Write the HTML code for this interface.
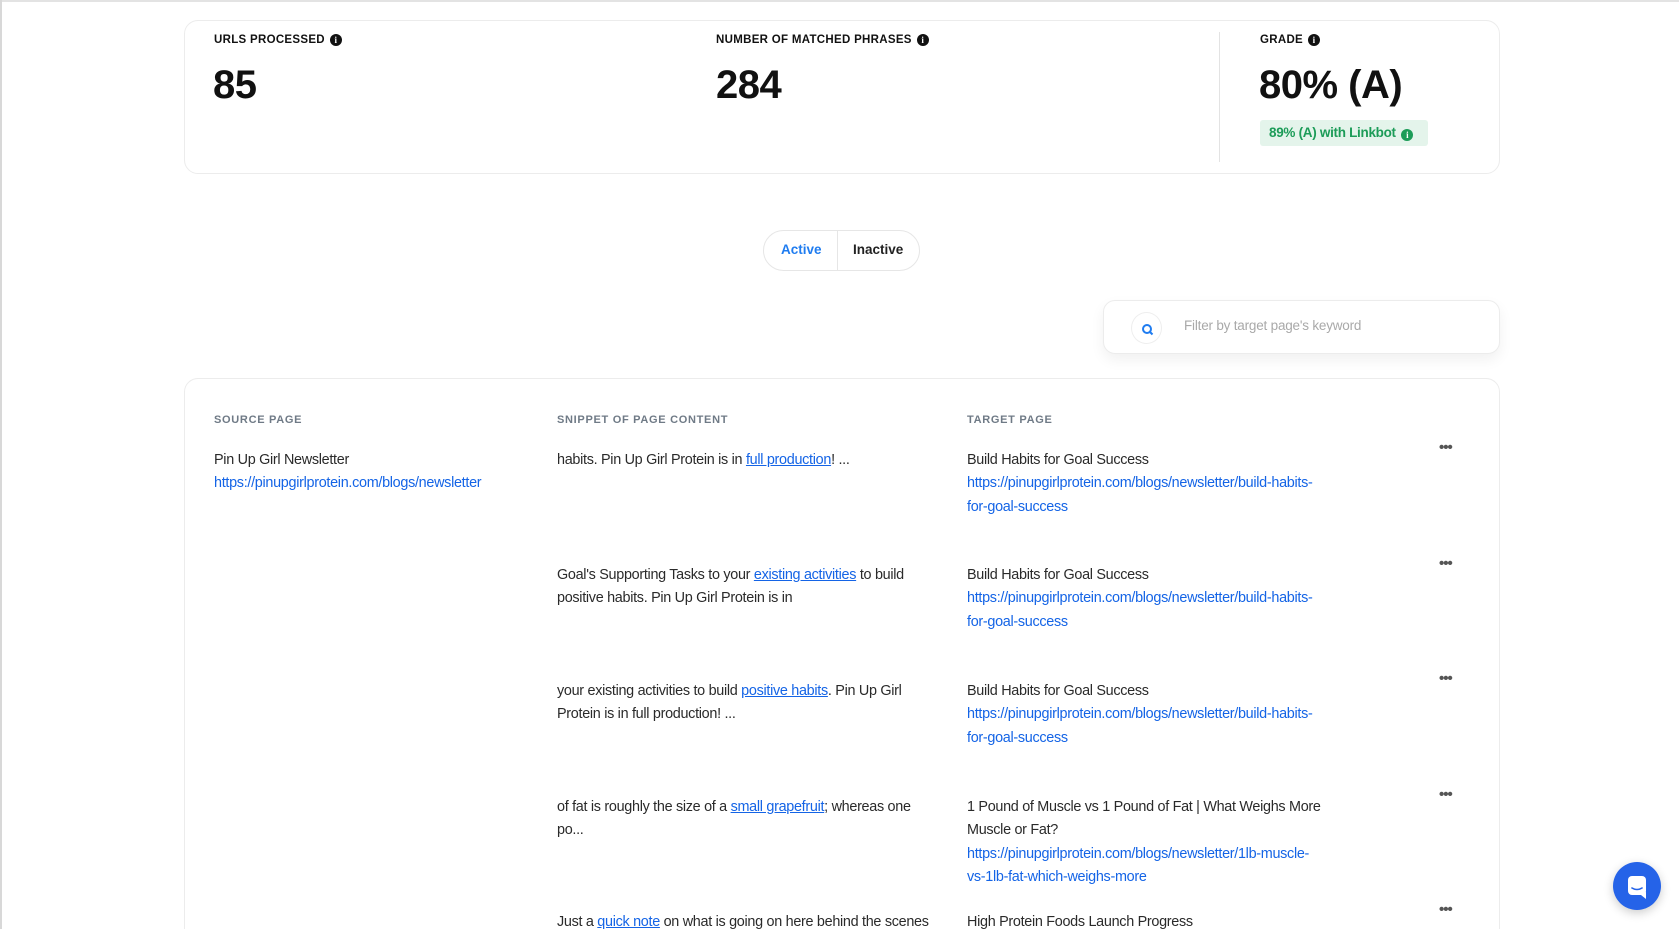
<!DOCTYPE html>
<html style="width:1679px;height:929px;overflow:hidden"><head><meta charset="utf-8"><style>
*{box-sizing:border-box;margin:0;padding:0}
body{width:1679px;height:929px;overflow:hidden;background:#fff;font-family:"Liberation Sans",sans-serif;color:#222;position:relative}
.topline{position:absolute;left:0;top:0;width:1679px;height:2px;background:#e3e3e3}
.leftline{position:absolute;left:0;top:0;width:2px;height:929px;background:#d8d8d8}
.card{position:absolute;border:1px solid #ececec;border-radius:14px;background:#fff}
.lbl{position:absolute;font-size:11.5px;font-weight:bold;letter-spacing:.3px;color:#111;display:flex;align-items:center;gap:5px;white-space:nowrap}
.info{display:inline-block;width:12px;height:12px;border-radius:50%;background:#111;color:#fff;font-size:9px;line-height:12px;text-align:center;font-weight:bold;font-family:"Liberation Serif",serif}
.num{position:absolute;font-size:40px;font-weight:bold;color:#111;letter-spacing:-.5px}
.badge{position:absolute;left:1260px;top:120px;width:168px;height:26px;background:#e4f4eb;border-radius:3px;color:#1c9c58;font-size:13.5px;font-weight:bold;line-height:26px;padding-left:9px;letter-spacing:-.3px;white-space:nowrap}
.badge .info{background:#1c9c58;vertical-align:-1px;margin-left:2px}
.toggle{position:absolute;left:763px;top:230px;width:157px;height:41px;border:1px solid #e6e6e6;border-radius:21px;font-size:13.5px;font-weight:bold}
.toggle span{position:absolute;top:11px}
.search{position:absolute;left:1103px;top:300px;width:397px;height:54px;border:1px solid #ececec;border-radius:12px;box-shadow:0 6px 14px rgba(0,0,0,.06);background:#fff}
.sicon{position:absolute;left:27px;top:11px;width:31px;height:32px;border:1px solid #eee;border-radius:50%}
.ph{position:absolute;left:80px;top:17px;font-size:13.5px;color:#a9a9a9;letter-spacing:-.2px}
.th{position:absolute;top:414px;font-size:11px;font-weight:bold;letter-spacing:.7px;color:#6f7a86}
.t{position:absolute;font-size:14.4px;line-height:23.3px;color:#2a2a2a;letter-spacing:-.3px;white-space:nowrap}
a{color:#1464e6;text-decoration:none}
a.u{text-decoration:underline}
.dots{position:absolute;left:1439px;font-size:15px;color:#555;font-weight:bold;letter-spacing:-1px}
.chat{position:absolute;left:1613px;top:862px;width:48px;height:48px;border-radius:50%;background:#2563e8;box-shadow:0 3px 10px rgba(0,0,0,.2)}
</style></head><body>
<div class="topline"></div><div class="leftline"></div>
<div class="card" style="left:184px;top:20px;width:1316px;height:154px"></div>
<div class="lbl" style="left:214px;top:34px">URLS PROCESSED <span class="info">i</span></div>
<div class="num" style="left:213px;top:63px">85</div>
<div class="lbl" style="left:716px;top:34px">NUMBER OF MATCHED PHRASES <span class="info">i</span></div>
<div class="num" style="left:716px;top:63px">284</div>
<div style="position:absolute;left:1219px;top:32px;width:1px;height:130px;background:#e3e3e3"></div>
<div class="lbl" style="left:1260px;top:34px">GRADE <span class="info">i</span></div>
<div class="num" style="left:1259px;top:63px">80% (A)</div>
<div class="badge">89% (A) with Linkbot <span class="info">i</span></div>

<div class="toggle"><span style="left:17px;color:#1f7cf0">Active</span><div style="position:absolute;left:73px;top:0;width:1px;height:39px;background:#e6e6e6"></div><span style="left:89px;color:#222">Inactive</span></div>

<div class="search"><div class="sicon"><svg width="31" height="32" viewBox="0 0 31 32"><circle cx="15" cy="16" r="4" fill="none" stroke="#1f7cf0" stroke-width="2"/><line x1="18" y1="19" x2="20.5" y2="21.5" stroke="#1f7cf0" stroke-width="2"/></svg></div><div class="ph">Filter by target page's keyword</div></div>

<div class="card" style="left:184px;top:378px;width:1316px;height:570px"></div>
<div class="th" style="left:214px">SOURCE PAGE</div>
<div class="th" style="left:557px">SNIPPET OF PAGE CONTENT</div>
<div class="th" style="left:967px">TARGET PAGE</div>

<div class="t" style="left:214px;top:449px">Pin Up Girl Newsletter<br><a>https://pinupgirlprotein.com/blogs/newsletter</a></div>

<div class="t" style="left:557px;top:449px">habits. Pin Up Girl Protein is in <a class="u">full production</a>! ...</div>
<div class="t" style="left:967px;top:449px">Build Habits for Goal Success<br><a>https://pinupgirlprotein.com/blogs/newsletter/build-habits-<br>for-goal-success</a></div>
<div class="dots" style="top:439px">•••</div>

<div class="t" style="left:557px;top:564px">Goal's Supporting Tasks to your <a class="u">existing activities</a> to build<br>positive habits. Pin Up Girl Protein is in</div>
<div class="t" style="left:967px;top:564px">Build Habits for Goal Success<br><a>https://pinupgirlprotein.com/blogs/newsletter/build-habits-<br>for-goal-success</a></div>
<div class="dots" style="top:555px">•••</div>

<div class="t" style="left:557px;top:680px">your existing activities to build <a class="u">positive habits</a>. Pin Up Girl<br>Protein is in full production! ...</div>
<div class="t" style="left:967px;top:680px">Build Habits for Goal Success<br><a>https://pinupgirlprotein.com/blogs/newsletter/build-habits-<br>for-goal-success</a></div>
<div class="dots" style="top:670px">•••</div>

<div class="t" style="left:557px;top:796px">of fat is roughly the size of a <a class="u">small grapefruit</a>; whereas one<br>po...</div>
<div class="t" style="left:967px;top:796px">1 Pound of Muscle vs 1 Pound of Fat | What Weighs More<br>Muscle or Fat?<br><a>https://pinupgirlprotein.com/blogs/newsletter/1lb-muscle-<br>vs-1lb-fat-which-weighs-more</a></div>
<div class="dots" style="top:786px">•••</div>

<div class="t" style="left:557px;top:911px">Just a <a class="u">quick note</a> on what is going on here behind the scenes</div>
<div class="t" style="left:967px;top:911px">High Protein Foods Launch Progress</div>
<div class="dots" style="top:901px">•••</div>

<div class="chat"><svg width="48" height="48" viewBox="0 0 48 48"><rect x="15" y="14" width="18" height="19" rx="4" fill="#fff"/><path d="M28 33 L33 37 L33 30 Z" fill="#fff"/><path d="M19 26 Q24 29 29 26" fill="none" stroke="#2563e8" stroke-width="1.6" stroke-linecap="round"/></svg></div>
</body></html>
